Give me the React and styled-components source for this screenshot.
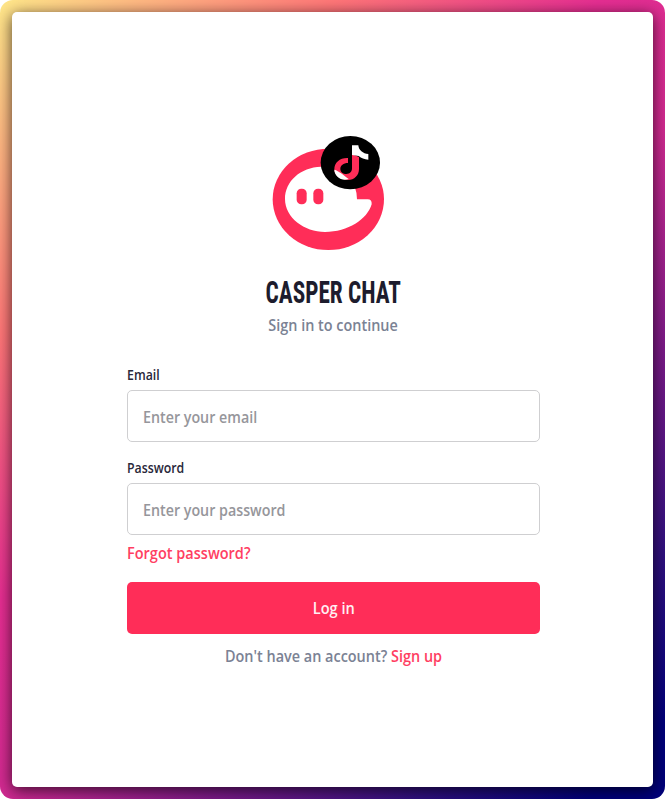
import React from "react";
import styled, { createGlobalStyle } from "styled-components";

const GlobalStyle = createGlobalStyle`
  * { box-sizing: border-box; }
  body { margin: 0; background: #fff; }
`;

const Frame = styled.div`
  display: flex;
  width: 665px;
  height: 799px;
  padding: 12px;
  border-radius: 13px;
  overflow: hidden;
  background: linear-gradient(135deg, #ffe88a 0%, #ff7678 23%, #e62e92 41%, #d22a91 54%, #7c1a88 69%, #30107f 83%, #00007a 95%);
`;

const Card = styled.main`
  display: flex;
  flex-direction: column;
  align-items: center;
  flex: 1;
  padding: 113px 0 0 2px;
  border-radius: 5px;
  background: #fff;
  box-shadow: 0 3px 15px rgba(0, 0, 0, 0.7);
  font-family: "Open Sans", sans-serif;
  font-size: 16.5px;
  font-weight: 600;
  line-height: 24px;
`;

const Logo = styled.svg`
  display: block;
  width: 140px;
  height: 135px;
  margin-right: 8px;
`;

const Title = styled.h1`
  margin: 13px 0 0;
  color: #1d1c2d;
  font: 700 31px/40px Roboto, sans-serif;
  font-stretch: 75%;
  white-space: nowrap;
  transform: scaleX(0.75);
`;

const Subtitle = styled.p`
  margin: 0;
  color: #7b8294;
  transform: scaleX(0.874);
`;

const Form = styled.form`
  display: flex;
  flex-direction: column;
  align-items: stretch;
  width: 413px;
  margin-top: 27px;
`;

const Field = styled.div`
  display: flex;
  flex-direction: column;
  margin-bottom: ${(p) => p.$gap}px;
`;

const Label = styled.label`
  height: 26px;
  color: #29283a;
  font-size: 14.5px;
  line-height: 22px;
  transform: scaleX(0.85);
  transform-origin: left;
`;

const InputBox = styled.div`
  display: flex;
  height: 52px;
  padding: 1px 15px 0;
  border: 1px solid #cfcfd1;
  border-radius: 5px;
  background: #fff;
`;

const Input = styled.input`
  width: 100%;
  padding: 0;
  border: 0;
  background: transparent;
  font: inherit;
  outline: none;
  transform: scaleX(0.865);
  transform-origin: left;
  &::placeholder { color: #96969b; opacity: 1; }
`;

const TextLink = styled.a`
  color: #ff3e62;
  text-decoration: none;
`;

const ForgotLink = styled(TextLink)`
  align-self: flex-start;
  transform: scaleX(0.88);
  transform-origin: left;
`;

const SubmitButton = styled.button`
  height: 52px;
  margin-top: 17px;
  border: 0;
  border-radius: 5px;
  background: #ff2d58;
  color: #fff0f3;
  font: inherit;
`;

const ButtonText = styled.span`
  display: inline-block;
  transform: scaleX(0.884);
`;

const Footer = styled.p`
  margin: 10px 0 0;
  color: #7b8294;
  text-align: center;
  transform: scaleX(0.875);
`;

function CasperLogo() {
  return (
    <Logo viewBox="0 0 420 405" aria-label="Casper Chat">
      <ellipse cx="205" cy="223" rx="167" ry="152" fill="#ff2d58" />
      <path fill="#fff" d="M183 125C122 127 75 168 75 222C75 278 133 321 195 321C264 321 322 283 335 238Q336 223 323 223H291Q291 204 284 184L215 125Z" />
      <rect x="110" y="191" width="30" height="47" rx="14" fill="#ff2d58" />
      <rect x="160" y="191" width="30" height="47" rx="14" fill="#ff2d58" />
      <ellipse cx="271" cy="113" rx="89" ry="80" fill="#000" />
      <path fill="#ff2d58" d="M276 88L297 96V132C297 151 283 165 264 165C241 165 223 151 223 133C223 112 240 98 264 99V114C250 114 241 122 241 131C241 141 249 147 259 147C270 147 276 140 276 130Z" />
      <path fill="#fff" d="M276 61H295C296 76 309 86 325 87V104C313 104 304 99 296 93L276 90ZM223 134C237 138 249 149 266 162C245 170 223 154 223 134Z" />
    </Logo>
  );
}

export default function App() {
  return (
    <>
      <GlobalStyle />
      <Frame>
        <Card>
          <CasperLogo />
          <Title>CASPER CHAT</Title>
          <Subtitle>Sign in to continue</Subtitle>
          <Form>
            <Field $gap={15}>
              <Label htmlFor="email">Email</Label>
              <InputBox>
                <Input id="email" type="email" placeholder="Enter your email" />
              </InputBox>
            </Field>
            <Field $gap={6}>
              <Label htmlFor="password">Password</Label>
              <InputBox>
                <Input id="password" type="password" placeholder="Enter your password" />
              </InputBox>
            </Field>
            <ForgotLink href="#">Forgot password?</ForgotLink>
            <SubmitButton type="button">
              <ButtonText>Log in</ButtonText>
            </SubmitButton>
            <Footer>
              Don't have an account? <TextLink href="#">Sign up</TextLink>
            </Footer>
          </Form>
        </Card>
      </Frame>
    </>
  );
}
